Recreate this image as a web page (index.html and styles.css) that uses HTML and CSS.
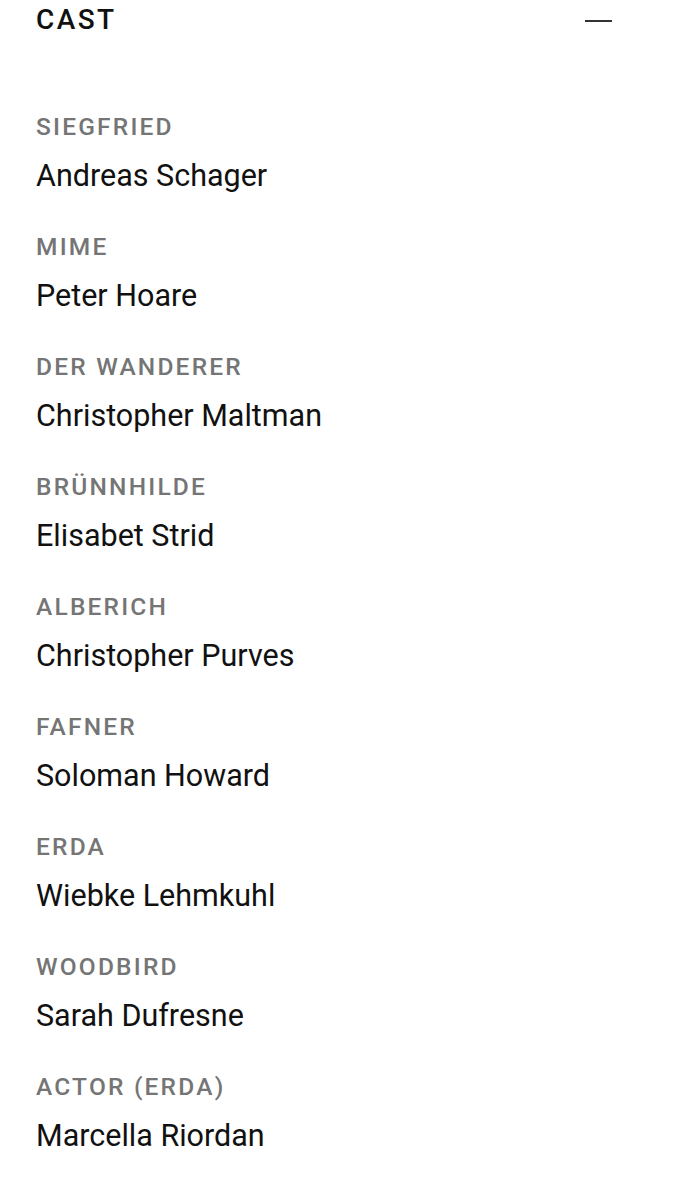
FILE: index.html
```html
<!DOCTYPE html>
<html lang="en">
<head>
<meta charset="utf-8">
<link rel="stylesheet" href="styles.css">
</head>
<body>
<section class="cast">
  <header class="cast-header">
    <h2 class="cast-title">CAST</h2>
    <span class="collapse-icon" aria-label="Collapse"></span>
  </header>
  <ul class="cast-list">
    <li class="cast-item"><div class="role">SIEGFRIED</div><div class="name">Andreas Schager</div></li>
    <li class="cast-item"><div class="role">MIME</div><div class="name">Peter Hoare</div></li>
    <li class="cast-item"><div class="role">DER WANDERER</div><div class="name">Christopher Maltman</div></li>
    <li class="cast-item"><div class="role">BRÜNNHILDE</div><div class="name">Elisabet Strid</div></li>
    <li class="cast-item"><div class="role">ALBERICH</div><div class="name">Christopher Purves</div></li>
    <li class="cast-item"><div class="role">FAFNER</div><div class="name">Soloman Howard</div></li>
    <li class="cast-item"><div class="role">ERDA</div><div class="name">Wiebke Lehmkuhl</div></li>
    <li class="cast-item"><div class="role">WOODBIRD</div><div class="name">Sarah Dufresne</div></li>
    <li class="cast-item"><div class="role">ACTOR (ERDA)</div><div class="name">Marcella Riordan</div></li>
  </ul>
</section>
</body>
</html>
```

FILE: styles.css
```css
html, body {
  margin: 0;
  padding: 0;
  background: #ffffff;
}
body {
  font-family: Roboto, "Liberation Sans", sans-serif;
  color: #111111;
}
.cast {
  padding: 0 77px 0 36px;
}
.cast-header {
  display: flex;
  justify-content: space-between;
  align-items: center;
  height: 40px;
}
.cast-title {
  margin: 0;
  font-size: 28px;
  line-height: 40px;
  font-weight: 500;
  letter-spacing: 2.4px;
  color: #111;
}
.collapse-icon {
  display: block;
  width: 27px;
  height: 2px;
  background: #333;
  margin-top: 2px;
}
.cast-list {
  list-style: none;
  margin: 0;
  padding: 72.6px 0 0 0;
  display: flex;
  flex-direction: column;
  gap: 39px;
}
.cast-item {
  display: flex;
  flex-direction: column;
  gap: 17px;
}
.role {
  font-size: 24.5px;
  line-height: 28px;
  font-weight: 500;
  letter-spacing: 2.2px;
  color: #757575;
}
.name {
  font-size: 30.5px;
  line-height: 36px;
  font-weight: 400;
  color: #111;
}
```
